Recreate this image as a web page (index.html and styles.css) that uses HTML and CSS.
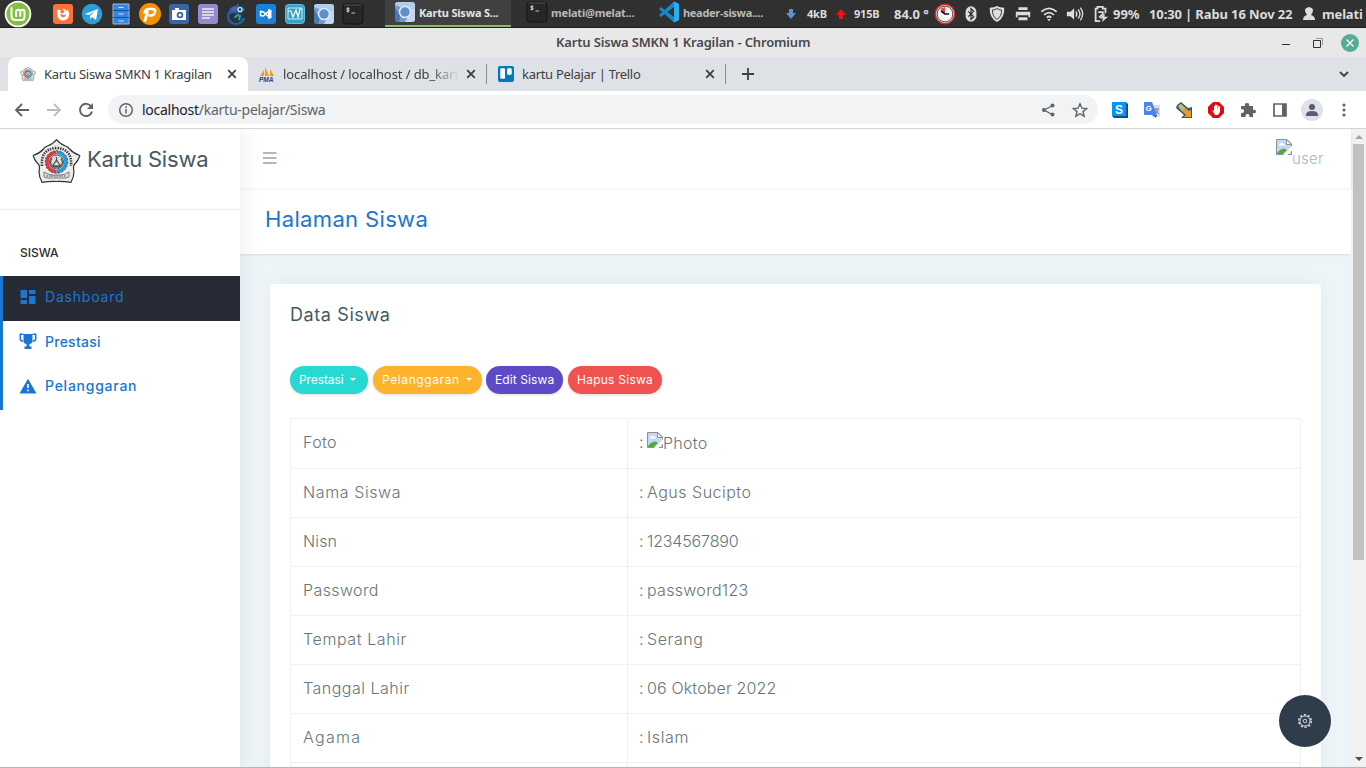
FILE: index.html
```html
<!DOCTYPE html>
<html lang="id">
<head>
<meta charset="utf-8">
<title>Kartu Siswa SMKN 1 Kragilan</title>
<link rel="stylesheet" href="styles.css">
</head>
<body>
<svg class="defs" width="0" height="0">
  <symbol id="broken" viewBox="0 0 16 16"><path d="M.5.5h10.5l4.5 4.5v10.5H.5z" fill="#c3d7f7" stroke="#8d9195"/><path d="M10.500.5V5.500h5z" fill="#fff" stroke="#8d9195"/><path d="M3 6q0-2 2-2 2-1 2.500 1 2 0 1.500 1.500H3z" fill="#fff"/><path d="M1 15q0-2 3-4 4-3 7 0l-4 4z" fill="#55a939"/><path d="M7 16 16 7v4.500L11.500 16z" fill="#fff"/></symbol>
  <symbol id="chromium" viewBox="0 0 22 22"><rect x="1" y="1" width="20" height="20" rx="3" fill="#6e9bd1"/><path d="M1 4q0-3 3-3h14q3 0 3 3v4H11z" fill="#b1cdea"/><path d="M1 7l6 8-2 6Q1 21 1 18z" fill="#4a78b3"/><path d="M15 14 11 21h7q3 0 3-3V8h-6z" fill="#c3d8ed"/><circle cx="11" cy="11" r="6.300" fill="#dfe9f3"/><circle cx="11" cy="11" r="4.700" fill="#5d8fcb"/></symbol>
  <symbol id="term" viewBox="0 0 22 22"><rect x="1" y="1" width="20" height="20" rx="3" fill="#272727" stroke="#121212"/><path d="M2.500 2h17" stroke="#555"/><path d="M7.500 5.300H5.200q-1 .8 0 1.500h1.600q1 .8 0 1.600H4.500M6 4.300v5.200M9.500 10h3.500" fill="none" stroke="#ddd" stroke-width=".9"/></symbol>
  <symbol id="school" viewBox="0 0 48 44"><path d="M24 .7q4 4.800 9 6.300 3 1 4 3 4 4.500 10.500 6.500-2 6-6 9.500-1 3 0 6 0 6-3 11.300-7-1-14.500-.8-7.500-.2-14.500.8-3-5.300-3-11.300 1-3 0-6-4-3.500-6-9.500Q7 14.500 11 10q1-2 4-3 5-1.500 9-6.300z" fill="#ececec" stroke="#333" stroke-width="1.200"/><path d="M9.500 27Q8 10 24 9q16 1 14.500 18" fill="none" stroke="#333" stroke-width="2.600" stroke-dasharray="1.400 1.100"/><path d="M24 13.500a9.500 9.500 0 0 0 0 19" fill="none" stroke="#db3c3c" stroke-width="3.500"/><path d="M24 13.500a9.500 9.500 0 0 1 0 19" fill="none" stroke="#269bd8" stroke-width="3.500"/><circle cx="24" cy="23" r="11.300" fill="none" stroke="#733f45" stroke-dasharray="2 1.500"/><circle cx="24" cy="23" r="7" fill="#ddd" stroke="#555"/><path d="M24 18v3l-4 6h8l-4-6M19.500 19.500q-3 4 0 7m9-7q3 4 0 7M20 28h8" fill="none" stroke="#555" stroke-width="1.300"/><path d="M11.500 33q4.500 3 8.500 3h8q4 0 8.500-3v5q-4 2-8.500 1h-8q-4.500 1-8.500-1z" fill="#ddd" stroke="#666" stroke-width=".8"/><path d="M14 37h20" stroke="#777" stroke-width="1.400" stroke-dasharray="1.500 1"/></symbol>
  <symbol id="x" viewBox="0 0 10 10"><path d="m1.200 1.200 7.600 7.600m0-7.600L1.200 8.800" stroke="#3c4043" stroke-width="1.800"/></symbol>
</svg>

<div class="panel">
  <svg class="mint" viewBox="0 0 28 28"><circle cx="14" cy="14" r="13.300" fill="#fff"/><circle cx="14" cy="14" r="11.500" fill="#86be43"/><path d="M7.500 8v8q0 4 4 4h5.500q3.500 0 3.500-3.500V12q0-2.300-2.100-2.300T16.300 12v4m0-4q0-2.300-2.100-2.300T12.100 12v4" fill="none" stroke="#fff" stroke-width="2" stroke-linecap="round"/></svg>
  <div class="launchers">
    <svg viewBox="0 0 22 22"><rect x="1" y="1" width="20" height="20" rx="3" fill="#ff7139"/><path d="M5.500 6Q4 16 9 17.300q5 1 7.500-3Q18.500 10 15 6q0 2-1 2-1-2-3-3 0 2.500 1.500 4-1 2-3.500 1L8 8.500 9.500 7H7z" fill="#fff"/><path d="M9 10q1.500 3.500 5 1-1 4-4 3Q8 13 9 10z" fill="#ff7139"/></svg>
    <svg viewBox="0 0 22 22"><circle cx="11" cy="11" r="10.300" fill="#2b9fda"/><path d="m4 11 13-5-2 11-4-3-2 2v-3l5-5-6 4z" fill="#fff"/></svg>
    <svg viewBox="0 0 22 22"><path d="M3 1h16v20H3z" fill="#3586e3" stroke="#aab7c5"/><path d="M3 7.500h16M3 14.500h16" stroke="#184d99"/><path d="M8.500 4.500h5M8.500 11h5M8.500 18h5" stroke="#d6e8ff"/></svg>
    <svg viewBox="0 0 22 22"><circle cx="11" cy="11" r="11" fill="#f69200"/><path d="M8.500 9 6 17.500" stroke="#fff" stroke-width="2.800" stroke-linecap="round"/><path d="M5.500 9.500Q6.500 6 10 6h3q4 0 3 3-.8 3.500-4 3.500h-1.500" fill="none" stroke="#fff" stroke-width="2.500" stroke-linecap="round"/></svg>
    <svg viewBox="0 0 22 22"><rect x="1" y="1" width="20" height="20" rx="3" fill="#3965a7"/><path d="M4 7h3V5h4v2h7v10H4z" fill="#fff"/><circle cx="12" cy="12" r="3.300" fill="#3965a7"/><circle cx="12" cy="12" r="1.500" fill="#fff"/></svg>
    <svg viewBox="0 0 22 22"><rect x="1" y="1" width="20" height="20" rx="3" fill="#9788cf"/><path d="M5 6h12M5 9h12M5 12h12M5 15h8" stroke="#eee" stroke-width="1.300"/></svg>
    <svg viewBox="0 0 22 22"><path d="M3 8q1-5 7-5l2-3 1 3q5 0 6 4l-4 4-8-1q-4 1-4 4 2 6 8 6 4-1 5-5h3q-1 7-9 7Q1 21 1 14q0-5 2-6z" fill="#17669d"/><path d="M4 7q4-6 13-2-6-1-8 4z" fill="#6758ad"/><circle cx="14" cy="6.500" r="2.600" fill="#dcefff"/><circle cx="14" cy="6.500" r="1.300" fill="#222"/><path d="M9 15q1-4 5-2l-1 4" fill="none" stroke="#19a7c7" stroke-width="2"/></svg>
    <svg viewBox="0 0 22 22"><rect x="1" y="1" width="20" height="20" rx="3" fill="#1781dc"/><path d="M5.500 8.500v4l3 .5 5.500-5v6l-5.500-5z" fill="none" stroke="#fff" stroke-width="1.500"/><path d="m13 6 3.500 1v8L13 16z" fill="#fff"/></svg>
    <svg viewBox="0 0 22 22"><rect x="1.500" y="1.500" width="19" height="19" rx="3" fill="#3c9fc3" stroke="#59c1e2"/><path d="M4 5h14v11H4z" fill="none" stroke="#b8efff"/><path d="M4 8h3l2 6 3-7 2 7 2-8h2" fill="none" stroke="#fff" stroke-width="1.200"/></svg>
    <svg><use href="#chromium"/></svg><svg><use href="#term"/></svg>
  </div>
  <div class="task current"><svg><use href="#chromium"/></svg><span>Kartu Siswa S...</span></div>
  <div class="task shell"><svg><use href="#term"/></svg><span>melati@melat...</span></div>
  <div class="task code"><svg viewBox="0 0 22 22"><path d="M16 .5 21 3v16l-5 2.500L1 8l2-2 13 10V6L3 16l-2-2z" fill="#1689cc"/><path d="m16 .5 5 2.500v16l-5 2.500z" fill="#2badf0"/></svg><span>header-siswa....</span></div>
  <div class="tray">
    <svg class="arrow" viewBox="0 0 12 12"><path d="M4 1h4v4h3L6 11 1 5h3z" fill="#5d91cf"/></svg><span class="net down">4kB</span>
    <svg class="arrow" viewBox="0 0 12 12"><path d="M4 11h4V7h3L6 1 1 7h3z" fill="#e91616"/></svg><span class="net up">915B</span>
    <span class="temp">84.0 °</span>
    <svg class="gauge" viewBox="0 0 22 22"><circle cx="11" cy="11" r="9.700" fill="#ddd" stroke="#cf2c2c" stroke-width="1.500"/><circle cx="11" cy="11" r="7.800" fill="#f6f6f6" stroke="#555"/><path d="M11 11 6 6l5-2z" fill="#ef4545"/><path d="m7 8 4 3h4" stroke="#111" fill="none" stroke-width="1.600"/></svg>
    <svg class="ti" viewBox="0 0 20 20"><rect x="4" y="1.500" width="12" height="17" rx="6" fill="#ddd"/><path d="m7 7 6 6-3 3V4l3 3-6 6" fill="none" stroke="#222" stroke-width="1.200"/></svg>
    <svg class="ti" viewBox="0 0 20 20"><path d="M10 1q3 2 8 2 1 11-8 16Q1 14 2 3q5 0 8-2z" fill="#ddd"/><path d="M10 4q2.500 1.500 5 1.500.5 7-5 10.500-5.500-3.500-5-10.500Q7.500 5.500 10 4z" fill="none" stroke="#303030"/></svg>
    <svg class="ti" viewBox="0 0 20 20"><path d="M5 2.500h10v3H5zM2 7.500h16v6h-2v-2H4v2H2zM5 13.500h10v3.500H5z" fill="#ddd"/></svg>
    <svg class="ti" viewBox="0 0 20 20"><path d="M1.500 7.500q8.500-7.500 17 0M4.500 11q5.500-5 11 0M7.500 14q2.500-2.500 5 0" fill="none" stroke="#ddd" stroke-width="2"/><path d="m8 15.500 2 2.500 2-2.500z" fill="#ddd"/></svg>
    <svg class="ti" viewBox="0 0 20 20"><path d="M1 7.500h4l4-4v13l-4-4H1z" fill="#ddd"/><path d="M11 7q2 3 0 6M13.500 5q4 5 0 10M16 3q5 7 0 14" fill="none" stroke="#ddd" stroke-width="1.500"/></svg>
    <svg class="ti" viewBox="0 0 20 20"><path d="M9 18H4V4h2V2h6v2h3v5M7 8h5v2L8 14" fill="none" stroke="#ddd" stroke-width="2"/><path d="m14 9-5 6h3l-1 4 7-6h-4z" fill="#ddd"/></svg>
    <span class="pct">99%</span><span class="date">10:30 | Rabu 16 Nov 22</span>
    <svg class="person" viewBox="0 0 14 16"><path d="M7 1q7 1 2 8 4 1 4 5H1q0-4 4-5Q0 2 7 1z" fill="#ddd"/></svg><span class="username">melati</span>
  </div>
</div>

<div class="titlebar"><span>Kartu Siswa SMKN 1 Kragilan - Chromium</span>
  <div class="winbtns"><i class="min"></i><svg viewBox="0 0 12 12"><path d="M4 1.500h6.500V8" stroke="#999" fill="none"/><path d="M1.500 3.500h7v7h-7z" stroke="#333" fill="none"/></svg><b><svg viewBox="0 0 10 10"><path d="m1.500 1.500 7 7m0-7-7 7" stroke="#fff" stroke-width="1.400"/></svg></b></div>
</div>

<div class="tabs">
  <div class="tab active"><svg class="fav" viewBox="0 0 48 44"><use href="#school"/></svg><span class="t1">Kartu Siswa SMKN 1 Kragilan</span><svg class="close"><use href="#x"/></svg></div>
  <div class="tab second"><svg class="fav" viewBox="0 0 16 16"><path d="M1 10 5 4v6zM6 10V1l4 9zM11 10V3l4 7z" fill="#f89c0e"/><text x="0" y="15.500" class="pma">PMA</text></svg><span class="t2">localhost / localhost / db_kart</span><svg class="close"><use href="#x"/></svg></div>
  <div class="tab third"><svg class="fav" viewBox="0 0 16 16"><rect width="16" height="16" rx="2" fill="#0079bf"/><rect x="2.300" y="2.300" width="4.700" height="10.500" rx="1" fill="#fff"/><rect x="9" y="2.300" width="4.700" height="6.500" rx="1" fill="#fff"/></svg><span class="t3">kartu Pelajar | Trello</span><svg class="close"><use href="#x"/></svg></div>
  <svg class="plus" viewBox="0 0 12 12"><path d="M6 0v12M0 6h12" stroke="#3c4043" stroke-width="1.800"/></svg>
  <svg class="chev" viewBox="0 0 10 8"><path d="m1 2 4 4 4-4" fill="none" stroke="#3c4043" stroke-width="1.800"/></svg>
</div>

<div class="toolbar">
  <svg class="nav" viewBox="0 0 16 16"><path d="M15 8H2m6-6L2 8l6 6" fill="none" stroke="#5f6368" stroke-width="1.800"/></svg>
  <svg class="nav" viewBox="0 0 16 16"><path d="M1 8h13M8 2l6 6-6 6" fill="none" stroke="#babcbe" stroke-width="1.800"/></svg>
  <svg class="nav" viewBox="0 0 16 16"><path d="M13.300 4.700A6.100 6.100 0 1 0 14 9.500" fill="none" stroke="#5f6368" stroke-width="1.900"/><path d="M15 1v6H9z" fill="#5f6368"/></svg>
  <div class="omnibox">
    <svg class="info" viewBox="0 0 16 16"><circle cx="8" cy="8" r="6.300" fill="none" stroke="#5f6368" stroke-width="1.500"/><path d="M8 7v4.500M8 4.200V6" stroke="#5f6368" stroke-width="1.500"/></svg>
    <span class="url"><em>localhost</em>/kartu-pelajar/Siswa</span>
    <svg class="share" viewBox="0 0 16 16"><path d="M13 3.500 4 8l9 5" fill="none" stroke="#5f6368" stroke-width="1.300"/><g fill="#5f6368"><circle cx="12.500" cy="3.500" r="2"/><circle cx="4" cy="8" r="2"/><circle cx="12.500" cy="12.500" r="2"/></g></svg>
    <svg class="star" viewBox="0 0 16 16"><path d="m8 1.800 1.900 4.300 4.700.4-3.600 3.100 1.100 4.600L8 11.700l-4.100 2.500L5 9.600 1.400 6.500l4.700-.4z" fill="none" stroke="#5f6368" stroke-width="1.400"/></svg>
  </div>
  <div class="exts">
    <svg viewBox="0 0 16 16"><path d="M0 0h14l2 2v14H2l-2-2z" fill="#00558f"/><path d="M0 0h14v14H0z" fill="#0895f6"/><text x="3" y="11.500" class="sletter">S</text></svg>
    <svg viewBox="0 0 16 16"><path d="M6 3h10v12H9z" fill="#dadce0"/><path d="M0 0h8l5 13H1q-1 0-1-1z" fill="#4a84ed"/><path d="m8 13 4 3 1-3z" fill="#3668c8"/><path d="M10 7h5m-3-1v1m2 0q-1 4-3 5m0-4 4 4" fill="none" stroke="#6e7d91"/><text x="1.500" y="8.500" class="gletter">G</text></svg>
    <svg viewBox="0 0 16 16"><path d="M1 3 5 0l7 6 4-1v11H5l3-3-8-7z" fill="#276273"/><path d="m2 4 3-2 8 7 2-1v7H8l2-2-7-7z" fill="#e39b32"/><path d="m2 4 3-2 4 4-3 3z" fill="#c9b58e"/></svg>
    <svg viewBox="0 0 16 16"><path d="M5 0h6l5 5v6l-5 5H5l-5-5V5z" fill="#e50914"/><path d="m4 8 2 1V4h1v4V2.500h1.300V8 3h1.300v5L10.500 4H12v6l-2 3H7z" fill="#fff"/></svg>
    <svg viewBox="0 0 16 16"><path d="M1 4h4q-1-3 2-3t2 3h4v4q3-1 3 1.500t-3 1.500v4H9.500q0-3-2-3t-2 3H1v-4q3 0 3-2T1 7z" fill="#5f6368"/></svg>
    <svg viewBox="0 0 16 16"><path d="M2 2h12v12H2z" fill="#fff" stroke="#5f6368" stroke-width="1.700"/><path d="M10 2h4v12h-4z" fill="#5f6368"/></svg>
    <svg viewBox="0 0 22 22" class="avatar"><circle cx="11" cy="11" r="11" fill="#dee1e6"/><circle cx="11" cy="8" r="3" fill="#585e70"/><path d="M5 16q0-4 6-4t6 4v1H5z" fill="#585e70"/></svg>
    <svg viewBox="0 0 16 16"><g fill="#5f6368"><circle cx="8" cy="3" r="1.600"/><circle cx="8" cy="8" r="1.600"/><circle cx="8" cy="13" r="1.600"/></g></svg>
  </div>
</div>

<div class="viewport">
  <aside>
    <div class="brand"><svg viewBox="0 0 48 44"><use href="#school"/></svg><span>Kartu Siswa</span></div>
    <div class="section">SISWA</div>
    <nav>
      <a class="on"><svg viewBox="0 0 16 16"><path d="M.5 1h6.500v8H.500zM9 1h6.500v4H9zM.5 11h6.500v4H.500zM9 7h6.500v8H9z" fill="#1976d2"/></svg><span class="m1">Dashboard</span></a>
      <a><svg viewBox="0 0 16 16"><path d="M3.500 1h9v6q0 4-3 4v2.500h2V16h-7v-2.500h2V11q-3 0-3-4z" fill="#1976d2"/><path d="M3.500 1.200H.3V6q0 2 3 2.300M12.500 1.200h3.200V6q0 2-3 2.300" fill="none" stroke="#1976d2" stroke-width="1.500"/></svg><span class="m2">Prestasi</span></a>
      <a><svg viewBox="0 0 16 16"><path d="M8 .800 16.500 15.500h-17z" fill="#1976d2"/><path d="M8 6v4M8 11.500v1.700" stroke="#fff" stroke-width="1.600"/></svg><span class="m3">Pelanggaran</span></a>
    </nav>
  </aside>
  <main>
    <header><svg class="burger" viewBox="0 0 14 12"><path d="M0 1h13.500M0 6h13.500M0 11h13.500" stroke="#90a4ae" stroke-width="1.600"/></svg><div class="user"><svg><use href="#broken"/></svg><span>user</span></div></header>
    <div class="heading"><h1>Halaman Siswa</h1></div>
    <div class="content"><section class="card">
      <h2>Data Siswa</h2>
      <div class="btns"><button class="b1">Prestasi<i></i></button><button class="b2">Pelanggaran<i></i></button><button class="b3">Edit Siswa</button><button class="b4">Hapus Siswa</button></div>
      <table>
        <tr class="first"><td class="s4">Foto</td><td class="s3"><span class="photo"><span class="colon">:</span><svg><use href="#broken"/></svg><span>Photo</span></span></td></tr>
        <tr><td class="s6">Nama Siswa</td><td class="s5"><span class="colon">: </span>Agus Sucipto</td></tr>
        <tr><td class="s1">Nisn</td><td class="s0"><span class="colon">: </span>1234567890</td></tr>
        <tr><td class="s4">Password</td><td class="s3"><span class="colon">: </span>password123</td></tr>
        <tr><td class="s6">Tempat Lahir</td><td class="s6"><span class="colon">: </span>Serang</td></tr>
        <tr><td class="s5">Tanggal Lahir</td><td class="s1"><span class="colon">: </span>06 Oktober 2022</td></tr>
        <tr><td class="s13">Agama</td><td class="s6"><span class="colon">: </span>Islam</td></tr>
        <tr><td></td><td></td></tr>
      </table>
    </section></div>
  </main>
  <div class="scroll"><i class="upa"></i><div class="thumb"></div><i class="dna"></i></div>
  <button class="settings"><svg viewBox="0 0 16 16"><circle cx="8" cy="8" r="6.200" fill="none" stroke="#ccd2d7" stroke-width="1.700" stroke-dasharray="2.200 1.696"/><circle cx="8" cy="8" r="5" fill="none" stroke="#ccd2d7"/><circle cx="8" cy="8" r="1.800" fill="none" stroke="#ccd2d7"/></svg></button>
</div>
</body>
</html>
```
FILE: styles.css
```css
* { box-sizing: border-box; }
body { margin: 0; width: 1366px; height: 768px; overflow: hidden; background: #fff; font-family: "Noto Sans", sans-serif; display: flex; flex-direction: column; }
svg { display: block; flex: none; overflow: visible; }
.defs { display: none; }
span { white-space: nowrap; }
.panel { height: 28px; flex: none; background: #303030; border-bottom: 1px solid #1d1d1d; display: flex; align-items: center; color: #dcdcdc; font-weight: 700; }
.mint { width: 28px; height: 28px; margin: 0 15px 0 4px; }
.launchers { display: flex; gap: 7px; width: 338px; padding-left: 5px; }
.launchers svg, .task svg { width: 22px; height: 22px; }
.task { display: flex; align-items: center; gap: 3px; height: 27px; font-size: 11px; color: #b9b9b9; padding-bottom: 3px; }
.task.current { width: 126px; background: #404040; border-bottom: 2px solid #8fb866; color: #e4e4e4; padding: 0 0 1px 9px; letter-spacing: -.2px; }
.task.shell { width: 132px; margin-left: 15px; letter-spacing: -.2px; }
.task.code { width: 127px; letter-spacing: -.3px; }
.tray { display: flex; align-items: center; height: 27px; font-size: 13px; }
.arrow { width: 12px; height: 12px; }
.net { font-size: 11px; letter-spacing: -.2px; }
.down { width: 28px; margin-left: 10px; }
.up { width: 34px; margin-left: 7px; }
.temp { width: 40px; margin-left: 6px; }
.gauge { width: 22px; height: 22px; margin-right: 6px; }
.ti { width: 18px; height: 18px; margin-right: 8px; }
.pct { width: 36px; margin-left: -5px; font-size: 13px; }
.date { width: 153px; letter-spacing: -.12px; }
.person { width: 14px; height: 16px; margin-right: 6px; }
.username { letter-spacing: -.15px; }
.titlebar { height: 29px; flex: none; display: flex; align-items: center; padding-left: 556px; background: #e8e8e8; color: #484848; font-size: 13px; font-weight: 600; }
.titlebar > span { width: 726px; letter-spacing: -.16px; padding-bottom: 1px; }
.winbtns { display: flex; align-items: center; }
.min { width: 8px; height: 1px; background: #333; margin-top: 4px; }
.winbtns > svg { width: 12px; height: 12px; margin: 0 17px 0 22px; }
.winbtns b { width: 18px; height: 18px; border-radius: 50%; background: #57ac98; display: grid; place-items: center; }
.winbtns b svg { width: 10px; height: 10px; }
.tabs { height: 34px; flex: none; display: flex; align-items: center; background: #dee1e6; color: #3c4043; font-size: 13px; padding-left: 8px; }
.tab { display: flex; align-items: center; height: 34px; padding-left: 12px; }
.active { width: 240px; background: #fff; border-radius: 8px 8px 0 0; }
.t1, .t3 { letter-spacing: -.3px; }
.fav { width: 16px; height: 16px; margin-right: 8px; }
.close { width: 10px; height: 10px; margin-left: auto; }
.active .close { margin-right: 11px; }
.second { width: 239px; padding-left: 11px; height: 20px; border-right: 1px solid #8b8e92; }
.t2 { width: 176px; letter-spacing: -.1px; overflow: hidden; -webkit-mask-image: linear-gradient(90deg, #000 84%, transparent); mask-image: linear-gradient(90deg, #000 84%, transparent); }
.second .close { margin-right: 10px; }
.third { width: 239px; padding-left: 11px; height: 20px; border-right: 1px solid #8b8e92; }
.third .close { margin-right: 10px; }
.pma { font: italic 700 6.500px "Liberation Sans", sans-serif; fill: #3a3970; }
.plus { width: 12px; height: 12px; margin-left: 16px; }
.chev { width: 10px; height: 8px; margin-left: auto; margin-right: 17px; }
.toolbar { height: 38px; flex: none; border-bottom: 1px solid #d3d4d6; display: flex; align-items: center; padding-left: 14px; }
.nav { width: 16px; height: 16px; margin-right: 16px; }
.omnibox { width: 990px; height: 29px; background: #f1f3f4; border-radius: 15px; display: flex; align-items: center; margin-left: -2px; padding-left: 10px; color: #5f6368; font-size: 14px; }
.info { width: 16px; height: 16px; margin-right: 8px; }
.url { letter-spacing: -.26px; padding-bottom: 1px; }
.url em { font-style: normal; color: #202124; }
.share { width: 16px; height: 16px; margin-left: auto; }
.star { width: 16px; height: 16px; margin: 0 10px 0 16px; }
.exts { display: flex; align-items: center; gap: 16px; margin-left: 14px; }
.exts svg { width: 16px; height: 16px; }
.exts .avatar { width: 22px; height: 22px; margin: 0 -3px; }
.sletter { font: 700 12px "Liberation Sans", sans-serif; fill: #fff; }
.gletter { font: 700 8px "Liberation Sans", sans-serif; fill: #fff; }
.viewport { height: 639px; position: relative; display: flex; border-bottom: 1px solid #b5b5b5; overflow: hidden; font-family: Inter, sans-serif; }
aside { width: 240px; background: #fff; box-shadow: 1px 0 20px rgba(0,0,0,.08); position: relative; z-index: 1; flex: none; }
.brand { height: 81px; border-bottom: 1px solid #eceeef; display: flex; align-items: flex-start; padding: 10px 0 0 32px; color: #455a64; }
.brand svg { width: 49px; height: 44px; }
.brand span { margin-left: 6px; font-size: 22px; line-height: 40px; letter-spacing: -.2px; }
.section { height: 66px; padding: 34px 0 0 20px; font-size: 12px; line-height: 18px; font-weight: 500; color: #272c33; }
nav { border-left: 3px solid #1976d2; height: 134px; }
nav a { display: flex; align-items: center; height: 44.500px; padding: 0 0 4px 17px; color: #1976d2; font-size: 14px; font-weight: 500; gap: 9px; }
nav svg { width: 16px; height: 16px; }
nav a.on { height: 45px; background: #262a35; font-weight: 400; }
.m1 { letter-spacing: .8px; }
.m2 { letter-spacing: .25px; }
.m3 { letter-spacing: .75px; }
main { width: 1111px; background: #eef5f9; display: flex; flex-direction: column; }
header { height: 59px; flex: none; display: flex; align-items: center; padding: 0 27px 0 23px; background: #fff; position: relative; box-shadow: 0 0 3px rgba(0,0,0,.1); }
.burger { width: 14px; height: 12px; margin-top: -2px; }
.user { display: flex; margin-left: auto; width: 48px; color: #a6b7bf; font-size: 15px; font-weight: 300; letter-spacing: .25px; margin-top: -10px; }
.user svg { width: 16px; height: 16px; }
.user span { line-height: 20px; padding-top: 10px; }
.heading { height: 66px; flex: none; background: #fff; box-shadow: 0 1px 2px rgba(0,0,0,.1); padding: 15px 25px; }
h1 { margin: 0; font-size: 22px; line-height: 32px; font-weight: 400; letter-spacing: .35px; color: #1976d2; }
.content { padding: 30px 30px 0; }
.card { height: 560px; background: #fff; border-radius: 4px; box-shadow: 0 0 20px rgba(0,0,0,.05); padding: 20px; }
h2 { margin: 0; font-size: 18px; line-height: 22px; font-weight: 400; color: #455a64; letter-spacing: .6px; }
.btns { display: flex; gap: 5px; margin-top: 40px; height: 28px; }
.btns button { border: 0; border-radius: 15px; padding: 0 0 1px 9px; color: #fff; font: 400 12px Inter, sans-serif; display: flex; align-items: center; box-shadow: 0 1px 3px rgba(0,0,0,.15); white-space: nowrap; }
.btns i { border: 3.500px solid transparent; border-top-color: #fff; border-bottom: 0; margin-left: 6px; }
.btns .b1 { width: 78px; background: #26dad2; letter-spacing: -.1px; }
.b1 i { margin-left: 7px; }
.btns .b2 { width: 109px; background: #ffb22b; letter-spacing: .6px; }
.btns .b3 { width: 77px; background: #5c4ac7; margin-left: -1px; letter-spacing: .1px; }
.btns .b4 { width: 94px; background: #ef5350; letter-spacing: .25px; }
table { margin-top: 24px; width: 1011px; border-collapse: collapse; table-layout: fixed; font-size: 16px; color: #67757c; font-weight: 300; }
td { border: 1px solid #f0f0f0; height: 49px; padding: 0 12px 2px; line-height: 24px; }
td:first-child { width: 337px; }
.first td { height: 50px; }
.first td:first-child { padding-bottom: 4px; }
.s0 { letter-spacing: -.15px; }
.s1 { letter-spacing: .15px; }
.s3 { letter-spacing: .3px; }
.s4 { letter-spacing: .4px; }
.s5 { letter-spacing: .5px; }
.s6 { letter-spacing: .6px; }
.s13 { letter-spacing: 1.300px; }
.colon { display: inline-block; width: 7px; letter-spacing: 0; margin-left: -1px; }
td:last-child .colon { margin-right: 1px; }
.photo { display: flex; }
.photo svg { width: 16px; height: 16px; margin: 2px 0 0; }
.photo > span:last-child { padding-top: 1px; }
.scroll { width: 15px; background: #f1f1f1; display: flex; flex-direction: column; align-items: center; }
.upa { border: 4px solid transparent; border-top: 0; border-bottom-color: #a3a3a3; margin: 6px 0 5px; }
.thumb { width: 11px; height: 416px; background: #c1c1c1; }
.dna { border: 4px solid transparent; border-bottom: 0; border-top-color: #505050; margin: auto 0 6px; }
.settings { position: absolute; right: 35px; bottom: 20px; z-index: 2; width: 52px; height: 52px; border: 0; border-radius: 50%; background: #2f3d4a; display: grid; place-items: center; padding: 0; }
.settings svg { width: 16px; height: 16px; }
```
